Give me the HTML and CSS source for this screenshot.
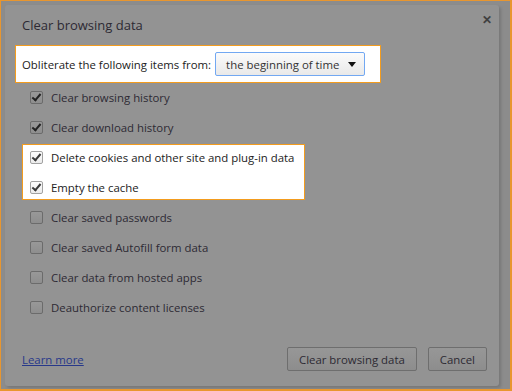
FILE: index.html
```html
<!DOCTYPE html>
<html lang="en">
<head>
    <meta charset="UTF-8">
    <title>Clear browsing data</title>
    <link rel="stylesheet" href="styles.css">
</head>
<body>

    <div class="frame">
        <div class="dialog">
            <div class="title-bar">
                <h2>Clear browsing data</h2>
                <span class="close">&#x2715;</span>
            </div>

            <div class="highlight time-box">
                <span>Obliterate the following items from:</span>
                <div class="select">
                    <span>the beginning of time</span>
                    <span class="arrow"></span>
                </div>
            </div>

            <div class="options">
                <label class="row"><span class="box checked"></span>Clear browsing history</label>
                <label class="row"><span class="box checked"></span>Clear download history</label>
                <div class="highlight pick-box">
                    <label class="row"><span class="box checked"></span>Delete cookies and other site and plug-in data</label>
                    <label class="row"><span class="box checked"></span>Empty the cache</label>
                </div>
                <label class="row"><span class="box"></span>Clear saved passwords</label>
                <label class="row"><span class="box"></span>Clear saved Autofill form data</label>
                <label class="row"><span class="box"></span>Clear data from hosted apps</label>
                <label class="row"><span class="box"></span>Deauthorize content licenses</label>
            </div>

            <div class="footer">
                <a href="#" class="learn">Learn more</a>
                <div class="buttons">
                    <button class="btn">Clear browsing data</button>
                    <button class="btn">Cancel</button>
                </div>
            </div>
        </div>
    </div>

</body>
</html>
```

FILE: styles.css
```css
body {
    font-family: 'Open Sans', sans-serif;
    margin: 0;
    padding: 0;
    background: #e8962f;
}

.frame {
    width: 509px;
    height: 388px;
    margin: 1px 0 0 1px;
    background: #8c8c8c;
    padding: 4px 0 0 4px;
    box-sizing: border-box;
}

.dialog {
    width: 494px;
    height: 381px;
    background: #939393;
    border-radius: 3px;
    box-shadow: 2px 2px 3px rgba(0, 0, 0, 0.15);
    padding: 0 17px;
    box-sizing: border-box;
    display: flex;
    flex-direction: column;
    color: #2d2a33;
    font-size: 11.4px;
}

.title-bar {
    display: flex;
    justify-content: space-between;
    align-items: center;
    height: 40px;
}

.title-bar h2 {
    margin: 0;
    font-size: 13px;
    font-weight: 400;
    color: #2d2a33;
}

.close {
    font-size: 12px;
    font-weight: 700;
    color: #404040;
    margin-right: -10px;
    margin-top: -12px;
}

.highlight {
    background: white;
    border: 1px solid #f39c1e;
    color: #222;
}

.time-box {
    display: flex;
    align-items: center;
    gap: 4px;
    height: 38px;
    box-sizing: border-box;
    margin: 0 0 2px -7px;
    padding-left: 6px;
    width: 366px;
}

.select {
    display: flex;
    align-items: center;
    justify-content: space-between;
    width: 150px;
    height: 24px;
    box-sizing: border-box;
    border: 1px solid #72a8f2;
    border-radius: 2px;
    background: linear-gradient(#fbfbfb, #e9e9e9);
    padding: 0 8px 0 10px;
    color: #333;
}

.arrow {
    width: 0;
    height: 0;
    border-left: 4px solid transparent;
    border-right: 4px solid transparent;
    border-top: 5px solid #111;
}

.options {
    display: flex;
    flex-direction: column;
    gap: 6px;
    padding-left: 8px;
}

.row {
    display: flex;
    align-items: center;
    gap: 8px;
    height: 24px;
}

.box {
    width: 13px;
    height: 13px;
    box-sizing: border-box;
    border: 1px solid #6b6b6b;
    border-radius: 2px;
    background: linear-gradient(#989898, #8e8e8e);
    position: relative;
}

.box.checked::after {
    content: "";
    position: absolute;
    left: 3px;
    top: 0px;
    width: 3px;
    height: 7px;
    border: solid #222;
    border-width: 0 2px 2px 0;
    transform: rotate(40deg);
}

.pick-box {
    display: flex;
    flex-direction: column;
    gap: 6px;
    margin: -1px 0 -1px -8px;
    padding-left: 7px;
    width: 283px;
    box-sizing: border-box;
}

.pick-box .box {
    border-color: #a2a2a2;
    background: linear-gradient(#fdfdfd, #ececec);
}

.pick-box .box.checked::after {
    border-color: #3a3a3a;
}

.footer {
    margin-top: auto;
    height: 39px;
    display: flex;
    justify-content: space-between;
    align-items: flex-start;
}

.learn {
    color: #27388a;
    margin-top: 5px;
}

.buttons {
    display: flex;
    gap: 11px;
    margin-right: -5px;
}

.btn {
    font-family: 'Open Sans', sans-serif;
    font-size: 11.4px;
    color: #2d2a33;
    height: 24px;
    padding: 0 11px;
    border: 1px solid #6e6e6e;
    border-radius: 2px;
    background: linear-gradient(#979797, #8d8d8d);
}
```
